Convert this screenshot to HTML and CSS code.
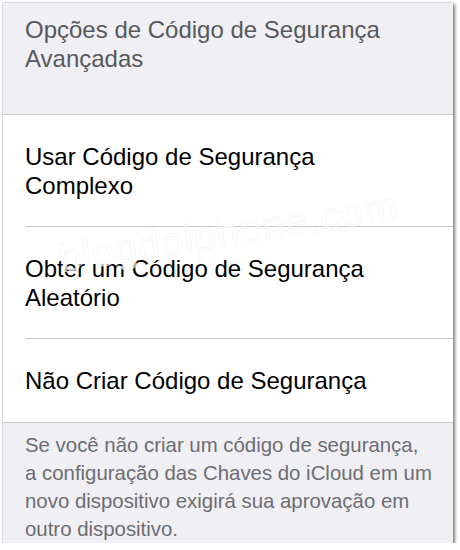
FILE: index.html
```html
<!DOCTYPE html>
<html lang="pt-BR">
<head>
  <meta charset="UTF-8">
  <meta name="viewport" content="width=device-width, initial-scale=1.0">
  <title>Opções de Código de Segurança</title>
  <link rel="stylesheet" href="styles.css">
</head>
<body>

<div class="frame">
  <div class="group-header">
    Opções de Código de Segurança Avançadas
  </div>

  <ul class="options">
    <li>Usar Código de Segurança Complexo</li>
    <li>Obter um Código de Segurança Aleatório</li>
    <li>Não Criar Código de Segurança</li>
    <span class="watermark">blogdoiphone.com</span>
  </ul>

  <div class="group-footer">
    Se você não criar um código de segurança,<br>
    a configuração das Chaves do iCloud em um novo dispositivo exigirá sua aprovação em outro dispositivo.
  </div>
</div>

</body>
</html>
```

FILE: styles.css
```css
body {
  margin: 0;
  font-family: "Liberation Sans", Arial, sans-serif;
  background: #fff;
}
.frame {
  width: 450px;
  height: 540px;
  margin: 2px 0 0 2px;
  border-top: 1px solid #dcdcdc;
  border-left: 1px solid #dcdcdc;
  background: #efeff4;
  box-shadow: 2px 2px 3px rgba(0,0,0,0.5);
  display: flex;
  flex-direction: column;
  overflow: hidden;
}
.group-header {
  height: 99px;
  padding: 12px 40px 0 22px;
  font-size: 24px;
  line-height: 29px;
  color: #58585c;
  border-bottom: 1px solid #c8c7cc;
}
.options {
  position: relative;
  list-style: none;
  margin: 0;
  padding: 0 0 0 22px;
  background: #fff;
  border-bottom: 1px solid #c8c7cc;
}
.options li {
  padding: 27px 40px 26px 0;
  font-size: 24px;
  line-height: 29px;
  color: #000;
  border-bottom: 1px solid #c8c7cc;
}
.options li:last-of-type {
  border-bottom: none;
  padding-bottom: 27px;
}
.watermark {
  position: absolute;
  left: 54px;
  top: 95px;
  font-size: 40px;
  letter-spacing: 1px;
  color: rgba(255,255,255,0.7);
  -webkit-text-stroke: 1px rgba(210,210,210,0.18);
  transform: rotate(-9deg);
  pointer-events: none;
}
.group-footer {
  flex: 1;
  padding: 8px 10px 0 22px;
  font-size: 20.4px;
  line-height: 28px;
  color: #6d6d72;
}
```
